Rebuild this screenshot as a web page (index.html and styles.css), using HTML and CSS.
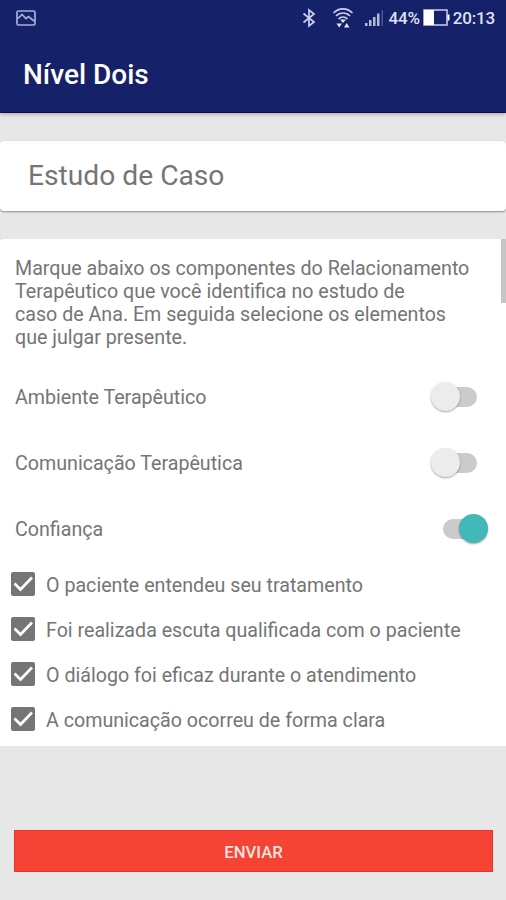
FILE: index.html
```html
<!DOCTYPE html>
<html lang="pt-BR">
  <head>
    <title>Nível Dois</title>
    <meta charset="UTF-8">
    <link rel="stylesheet" href="styles.css">
  </head>
  <body>
    <header class="app-header">
      <div class="status-bar">
        <svg class="icon-picture" width="20" height="16" viewBox="0 0 20 16">
          <rect x="1" y="1" width="18" height="14" rx="1.5"/>
          <path d="M2 8.5L6 4.5L10 8.5L12.5 6.5L18 11"/>
        </svg>
        <div class="status-icons">
          <svg class="icon-bluetooth" width="14" height="20" viewBox="0 0 14 20">
            <path d="M1.5 5.5L12 14L7 18V2L12 6L1.5 14.5"/>
          </svg>
          <svg class="icon-wifi" width="22" height="22" viewBox="0 0 22 22">
            <path d="M1.500 6C7 .5 15 .5 20.500 6M4 9C8 5 14 5 18 9M6.500 12C9 9.300 13 9.300 15.500 12"/>
            <path class="fill" d="M8 12.500H14L11 16ZM4.500 16.500H10L7.200 20.500ZM12 20.500H17.500L14.700 16Z"/>
          </svg>
          <svg class="icon-signal" width="20" height="18" viewBox="0 0 20 18">
            <path d="M1 14h2.500v3H1zM5 11h2.500v6H5zM9 8h2.500v9H9zM13 4.500h2.500V17H13z"/>
            <path class="dim" d="M17.500 1H19v16h-1.500z"/>
          </svg>
          <span class="battery-text">44%</span>
          <svg class="icon-battery" width="27" height="17" viewBox="0 0 27 17">
            <rect x="1" y="1" width="23" height="15"/>
            <path d="M1 1h10v15H1zM24.500 5.500h2v6h-2z"/>
          </svg>
          <span class="clock">20:13</span>
        </div>
      </div>
      <h1>Nível Dois</h1>
    </header>

    <main>
      <section class="card title-card">
        <h2>Estudo de Caso</h2>
      </section>

      <section class="card form-card">
        <p>Marque abaixo os componentes do Relacionamento<br>Terapêutico que você identifica no estudo de<br>caso de Ana. Em seguida selecione os elementos<br>que julgar presente.</p>

        <label class="switch-row">
          <span>Ambiente Terapêutico</span>
          <input type="checkbox" class="switch">
        </label>
        <label class="switch-row">
          <span>Comunicação Terapêutica</span>
          <input type="checkbox" class="switch">
        </label>
        <label class="switch-row">
          <span>Confiança</span>
          <input type="checkbox" class="switch" checked>
        </label>

        <div class="check-row">
          <svg class="check" viewBox="0 0 24 24"><rect width="24" height="24" rx="2"/><path d="M3.500 11.500L9.500 17.500L21 5.500"/></svg>
          <span>O paciente entendeu seu tratamento</span>
        </div>
        <div class="check-row">
          <svg class="check" viewBox="0 0 24 24"><rect width="24" height="24" rx="2"/><path d="M3.500 11.500L9.500 17.500L21 5.500"/></svg>
          <span>Foi realizada escuta qualificada com o paciente</span>
        </div>
        <div class="check-row">
          <svg class="check" viewBox="0 0 24 24"><rect width="24" height="24" rx="2"/><path d="M3.500 11.500L9.500 17.500L21 5.500"/></svg>
          <span>O diálogo foi eficaz durante o atendimento</span>
        </div>
        <div class="check-row">
          <svg class="check" viewBox="0 0 24 24"><rect width="24" height="24" rx="2"/><path d="M3.500 11.500L9.500 17.500L21 5.500"/></svg>
          <span>A comunicação ocorreu de forma clara</span>
        </div>
        <div class="scrollbar"></div>
      </section>

      <button class="send">ENVIAR</button>
    </main>
  </body>
</html>
```

FILE: styles.css
```css
* {
  box-sizing: border-box;
}

body {
  margin: 0;
  height: 900px;
  overflow: hidden;
  background-color: #e7e7e7;
  color: #757575;
  font-family: Roboto, sans-serif;
}

.app-header {
  height: 113px;
  background-color: #152168;
  border-bottom: 1px solid #0c0e50;
  box-shadow: 0 1px 4px rgba(0, 0, 0, 0.3);
  color: #fff;
}

.status-bar {
  display: flex;
  align-items: center;
  justify-content: space-between;
  height: 35px;
  padding: 0 11px 0 16px;
}

.status-icons {
  display: flex;
  align-items: center;
  color: #dfe1f3;
  font-size: 17px;
  font-weight: 500;
  letter-spacing: -0.2px;
}

.icon-picture,
.icon-bluetooth,
.icon-wifi {
  fill: none;
  stroke: #ccd0ed;
  stroke-width: 1.7;
}

.icon-picture {
  stroke: #a9b0dc;
}

.icon-bluetooth {
  margin-right: 16px;
}

.icon-wifi {
  margin-right: 10px;
}

.icon-wifi .fill {
  fill: #e4e6f6;
  stroke: none;
}

.icon-signal {
  fill: #b5b9da;
  margin-right: 5px;
}

.icon-signal .dim {
  fill: #4b5390;
}

.icon-battery {
  margin: 0 3px;
  fill: #fff;
}

.icon-battery rect {
  fill: none;
  stroke: #ccd0ed;
  stroke-width: 1.5;
}

h1 {
  margin: 0;
  padding: 0 23px;
  font-size: 28px;
  font-weight: 500;
  line-height: 80px;
}

main {
  display: flex;
  flex-direction: column;
  gap: 28px;
  padding-top: 28px;
}

.card {
  background-color: #fff;
  border-radius: 4px;
}

.title-card {
  height: 70px;
  padding: 0 28px;
  box-shadow: 0 1px 2px rgba(0, 0, 0, 0.4);
}

h2 {
  margin: 0;
  font-size: 28.2px;
  font-weight: 400;
  line-height: 70px;
}

.form-card {
  position: relative;
  height: 507px;
  padding-top: 18px;
  border-radius: 4px 0 0 0;
  font-size: 19.65px;
}

.form-card p {
  margin: 0 0 15px;
  padding: 0 15px;
  line-height: 23px;
  white-space: nowrap;
}

.switch-row {
  display: flex;
  align-items: center;
  justify-content: space-between;
  height: 66px;
  padding: 0 29px 0 15px;
}

.switch {
  appearance: none;
  display: flex;
  align-items: center;
  width: 34px;
  height: 20px;
  margin: 0 0 1px;
  border-radius: 10px;
  background-color: #cbcbcb;
}

.switch::before {
  content: "";
  flex: none;
  width: 29px;
  height: 29px;
  margin-left: -12px;
  border-radius: 50%;
  background-color: #ececec;
  box-shadow: 0 1px 2px rgba(0, 0, 0, 0.35);
}

.switch:checked::before {
  margin-left: 16px;
  background-color: #42b8b9;
}

.check-row {
  display: flex;
  align-items: center;
  gap: 11px;
  height: 45px;
  padding-left: 11px;
}

.check-row span {
  padding-top: 2px;
}

.check {
  width: 24px;
  height: 24px;
  margin-bottom: 2px;
  fill: #757575;
}

.check path {
  fill: none;
  stroke: #fff;
  stroke-width: 2.7;
}

.scrollbar {
  position: absolute;
  top: 0;
  right: 0;
  width: 5px;
  height: 64px;
  background-color: #c6c6c6;
}

.send {
  height: 42px;
  margin: 56px 13px 0 14px;
  padding: 2px 0 0;
  border: 1px solid #e5342b;
  background-color: #f54336;
  color: #fde3df;
  font-family: inherit;
  font-size: 16.7px;
  font-weight: 500;
}
```
